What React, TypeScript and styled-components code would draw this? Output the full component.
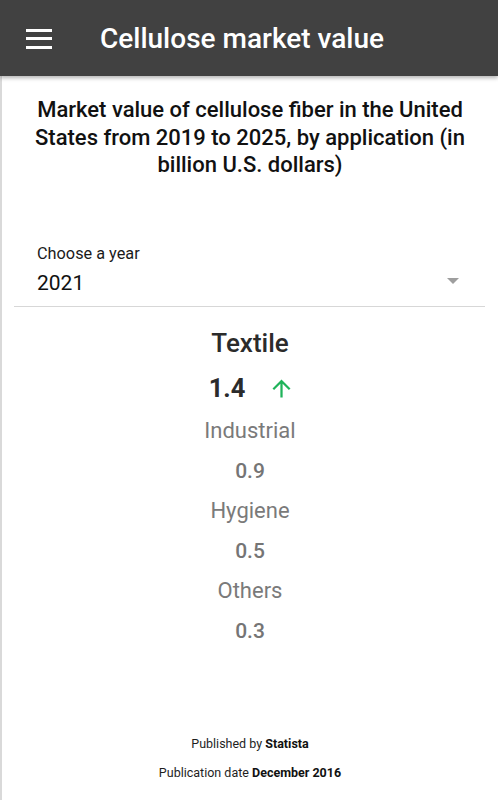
import React from "react";
import styled, { createGlobalStyle } from "styled-components";

const Global = createGlobalStyle`
  html, body { margin: 0; padding: 0; background: #fff; }
  body { font-family: Roboto, "Noto Sans", Arial, sans-serif; }
  * { box-sizing: border-box; }
`;

const Page = styled.div`
  display: flex;
  flex-direction: column;
  min-height: 100vh;
`;

const Header = styled.header`
  height: 76px;
  background: #414141;
  display: flex;
  align-items: center;
  padding-left: 26px;
  gap: 48px;
  box-shadow: 0 2px 4px rgba(0, 0, 0, 0.3);
  position: relative;
  z-index: 1;
`;

const MenuButton = styled.button`
  width: 26px;
  height: 20px;
  padding: 0;
  border: 0;
  background: transparent;
  display: flex;
  flex-direction: column;
  justify-content: space-between;
  margin-top: 1px;
`;

const MenuBar = styled.span`
  display: block;
  height: 3px;
  width: 26px;
  background: #fff;
`;

const HeaderTitle = styled.h1`
  margin: 0;
  color: #fff;
  font-size: 28px;
  font-weight: 500;
`;

const Content = styled.main`
  flex: 1;
  display: flex;
  flex-direction: column;
  border-left: 2px solid #d9d9d9;
`;

const ChartTitle = styled.h2`
  margin: 20px 16px 0;
  text-align: center;
  font-size: 22px;
  line-height: 27.5px;
  font-weight: 500;
  color: #111;
`;

const Select = styled.div`
  margin: 65px 13px 0 12px;
  padding: 0 26px 9px 23px;
  border-bottom: 1px solid #d7d7d7;
  display: flex;
  align-items: flex-end;
  justify-content: space-between;
`;

const SelectText = styled.div`
  display: flex;
  flex-direction: column;
  gap: 5px;
`;

const SelectLabel = styled.span`
  font-size: 16.3px;
  line-height: 20px;
  color: #1a1a1a;
`;

const SelectValue = styled.span`
  font-size: 21px;
  line-height: 28px;
  color: #111;
`;

const Caret = styled.span`
  width: 0;
  height: 0;
  border-left: 6.5px solid transparent;
  border-right: 6.5px solid transparent;
  border-top: 6px solid #9e9e9e;
  margin-bottom: 13px;
`;

const Stats = styled.section`
  display: flex;
  flex-direction: column;
  align-items: center;
  gap: 12px;
  margin-top: 20px;
`;

const Category = styled.div<{ $active?: boolean }>`
  font-size: ${(p) => (p.$active ? "26px" : "22px")};
  line-height: ${(p) => (p.$active ? "33px" : "28px")};
  font-weight: ${(p) => (p.$active ? 500 : 400)};
  color: ${(p) => (p.$active ? "#2b2b2b" : "#7a7a7a")};
`;

const ValueRow = styled.div`
  display: flex;
  align-items: center;
  gap: 23px;
  padding-left: 4px;
`;

const Value = styled.div<{ $active?: boolean }>`
  font-size: ${(p) => (p.$active ? "25.5px" : "21px")};
  line-height: ${(p) => (p.$active ? "33px" : "28px")};
  font-weight: ${(p) => (p.$active ? 700 : 500)};
  color: ${(p) => (p.$active ? "#2b2b2b" : "#757575")};
`;

const Footer = styled.footer`
  margin-top: auto;
  padding-bottom: 19px;
  display: flex;
  flex-direction: column;
  align-items: center;
  gap: 13px;
  font-size: 12.5px;
  line-height: 16px;
  color: #1e1e1e;
`;

const Strong = styled.b`
  font-weight: 700;
  color: #111;
`;

const ArrowUp = () => (
  <svg width="27" height="27" viewBox="0 0 24 24" aria-hidden="true">
    <path
      fill="#1fb35a"
      d="M4 12l1.41 1.41L11 7.83V20h2V7.83l5.58 5.59L20 12l-8-8-8 8z"
    />
  </svg>
);

const others = [
  { name: "Industrial", value: "0.9" },
  { name: "Hygiene", value: "0.5" },
  { name: "Others", value: "0.3" },
];

export default function App() {
  return (
    <Page>
      <Global />
      <Header>
        <MenuButton aria-label="menu">
          <MenuBar />
          <MenuBar />
          <MenuBar />
        </MenuButton>
        <HeaderTitle>Cellulose market value</HeaderTitle>
      </Header>
      <Content>
        <ChartTitle>
          Market value of cellulose fiber in the United States from 2019 to
          2025, by application (in billion U.S. dollars)
        </ChartTitle>
        <Select>
          <SelectText>
            <SelectLabel>Choose a year</SelectLabel>
            <SelectValue>2021</SelectValue>
          </SelectText>
          <Caret />
        </Select>
        <Stats>
          <Category $active>Textile</Category>
          <ValueRow>
            <Value $active>1.4</Value>
            <ArrowUp />
          </ValueRow>
          {others.map((o) => (
            <React.Fragment key={o.name}>
              <Category>{o.name}</Category>
              <Value>{o.value}</Value>
            </React.Fragment>
          ))}
        </Stats>
        <Footer>
          <div>
            Published by <Strong>Statista</Strong>
          </div>
          <div>
            Publication date <Strong>December 2016</Strong>
          </div>
        </Footer>
      </Content>
    </Page>
  );
}
